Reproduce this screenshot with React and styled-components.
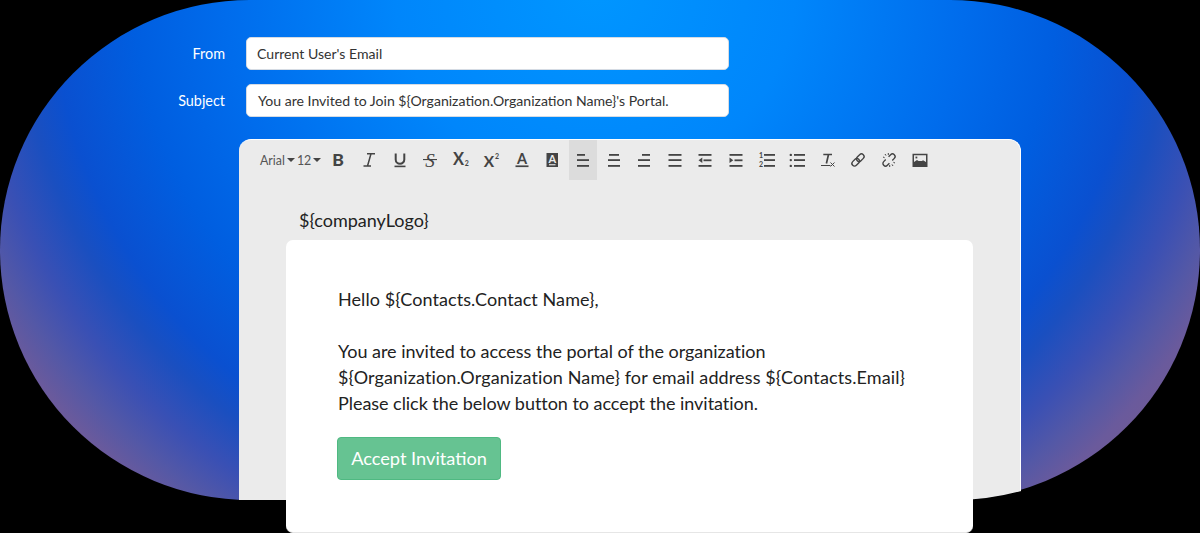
import styled, { createGlobalStyle } from 'styled-components';

const GlobalStyle = createGlobalStyle`
	html, body {
		margin: 0;
		height: 100%;
		background: #000;
		overflow: hidden;
	}
	body {
		font-family: Lato, 'Liberation Sans', sans-serif;
	}
`;

const Page = styled.div`
	position: relative;
	width: 1200px;
	height: 533px;
	overflow: hidden;
	background: #000;
`;

const Backdrop = styled.div`
	position: absolute;
	left: 0;
	top: 0;
	width: 1200px;
	height: 500px;
	border-radius: 250px;
	background: radial-gradient(
		ellipse 770px 730px at 595px -10px,
		#0096ff 0,
		#0086fb 26%,
		#006cec 48%,
		#005ee0 60%,
		#0a50d0 70.5%,
		#1a4fc0 75%,
		#3a50b4 81%,
		#5458a6 86%,
		#6a5a9c 90%,
		#7c5c88 100%
	);
`;

const Content = styled.div`
	position: relative;
	display: flex;
	flex-direction: column;
	padding-top: 37px;
`;

const Field = styled.div`
	display: flex;
	align-items: center;
	height: 33px;
	margin-bottom: 14px;
`;

const Label = styled.label`
	width: 225px;
	text-align: right;
	font-size: 14.4px;
	color: #fff;
`;

const Input = styled.div`
	box-sizing: border-box;
	width: 483px;
	height: 33px;
	margin-left: 21px;
	padding-left: ${(p) => p.$indent}px;
	display: flex;
	align-items: center;
	background: #fff;
	border: 1px solid #d5dbe3;
	border-radius: 5px;
	font-size: 14.08px;
	color: #333;
`;

const Editor = styled.div`
	box-sizing: border-box;
	width: 782px;
	height: 361px;
	margin: 8px 0 0 239px;
	background: #ebebeb;
	border-top: 1px solid #fff;
	border-right: 1px solid #fff;
	border-radius: 12px 12px 0 0;
	clip-path: path('M0 0 H782 V352 A250 250 0 0 1 711 361 H0 Z');
`;

const Toolbar = styled.div`
	display: flex;
	align-items: center;
	height: 40px;
	padding-left: 21px;
	color: #444;
`;

const FontPick = styled.span`
	display: flex;
	align-items: center;
	gap: 2px;
	font-size: 12.4px;
	color: #555;
`;

const Caret = styled.i`
	width: 0;
	height: 0;
	margin-right: ${(p) => p.$gap || 0}px;
	border-left: 4px solid transparent;
	border-right: 4px solid transparent;
	border-top: 4px solid #444;
`;

const Tool = styled.button`
	display: flex;
	align-items: center;
	justify-content: center;
	flex: none;
	width: 28px;
	height: 40px;
	margin-right: 2.6px;
	padding: 0;
	border: 0;
	background: ${(p) => (p.$active ? '#dcdcdc' : 'transparent')};
	color: #444;
`;

const Glyph = styled.svg`
	width: 18px;
	height: 18px;
	display: block;
	overflow: visible;
`;

const Small = ({ x, y, children }) => (
	<text x={x} y={y} textAnchor='middle' fontFamily='Lato, sans-serif' fontSize='7' fontWeight='700' fill='currentColor'>
		{children}
	</text>
);

const Big = ({ x = 9, y = 14, size = 16, weight = 700, family = 'Lato, sans-serif', italic, children }) => (
	<text
		x={x}
		y={y}
		textAnchor='middle'
		fontFamily={family}
		fontSize={size}
		fontWeight={weight}
		fontStyle={italic ? 'italic' : 'normal'}
		fill='currentColor'
	>
		{children}
	</text>
);

const Lines = ({ rows, children }) => (
	<Glyph viewBox='0 0 18 18'>
		{rows.map(([x, y, w], i) => (
			<rect key={i} x={x} y={y} width={w} height='1.8' fill='currentColor' />
		))}
		{children}
	</Glyph>
);

const LogoTag = styled.div`
	margin: 28px 0 0 60px;
	font-size: 18px;
	line-height: 24px;
	color: #222;
`;

const Document = styled.div`
	position: absolute;
	left: 286px;
	top: 240px;
	box-sizing: border-box;
	width: 687px;
	height: 293px;
	padding: 46px 52px;
	background: #fff;
	border-bottom: 1px solid #e6e6e6;
	border-radius: 7px;
	font-size: 18px;
	line-height: 26px;
	color: #222;
`;

const Paragraph = styled.p`
	margin: 0 0 26px;
`;

const Line = styled.span`
	display: block;
	letter-spacing: ${(p) => p.$track || 0}px;
`;

const AcceptButton = styled.div`
	box-sizing: border-box;
	display: flex;
	align-items: center;
	justify-content: center;
	width: 164px;
	height: 43px;
	margin: -5px 0 0 -1px;
	padding-bottom: 2px;
	background: #66c392;
	border: 1px solid #4fb982;
	border-radius: 4px;
	font-size: 18.2px;
	color: #fff;
`;

const App = () => {
	return (
		<Page>
			<GlobalStyle />
			<Backdrop />
			<Content>
				<Field>
					<Label>From</Label>
					<Input $indent={10}>Current User's Email</Input>
				</Field>
				<Field>
					<Label>Subject</Label>
					<Input $indent={11}>You are Invited to Join $&#123;Organization.Organization Name&#125;'s Portal.</Input>
				</Field>
				<Editor>
					<Toolbar>
						<FontPick>
							Arial
							<Caret />
							12
							<Caret $gap={3} />
						</FontPick>
						<Tool>
							<Glyph viewBox='0 0 18 18'>
								<Big size={17.5} y={15} weight={900}>B</Big>
							</Glyph>
						</Tool>
						<Tool>
							<Glyph viewBox='0 0 18 18'>
								<path d='M7 2.7 H15 M3.5 15 H11 M11 2.7 L7.5 15' stroke='currentColor' strokeWidth='1.5' fill='none' />
							</Glyph>
						</Tool>
						<Tool>
							<Glyph viewBox='0 0 18 18'>
								<path d='M4.7 2.5 V8.5 a4.3 4.3 0 0 0 8.6 0 V2.5' stroke='currentColor' strokeWidth='2' fill='none' />
								<rect x='3.5' y='14.6' width='11' height='1.6' fill='currentColor' />
							</Glyph>
						</Tool>
						<Tool>
							<Glyph viewBox='0 0 18 18'>
								<Big size={19} y={15.5} weight={400} italic family='Liberation Serif, serif'>S</Big>
								<rect x='2' y='8' width='14' height='1.1' fill='currentColor' />
							</Glyph>
						</Tool>
						<Tool>
							<Glyph viewBox='0 0 18 18'>
								<Big x={6.5} y={14} size={16.5}>X</Big>
								<Small x={14.8} y={15}>2</Small>
							</Glyph>
						</Tool>
						<Tool>
							<Glyph viewBox='0 0 18 18'>
								<Big x={7} y={16} size={15.5}>X</Big>
								<Small x={15} y={8}>2</Small>
							</Glyph>
						</Tool>
						<Tool>
							<Glyph viewBox='0 0 18 18'>
								<Big y={12.5} size={14.5}>A</Big>
								<rect x='2.5' y='14.4' width='13' height='1.7' fill='currentColor' />
							</Glyph>
						</Tool>
						<Tool>
							<Glyph viewBox='0 0 18 18'>
								<rect x='3.5' y='2' width='11.5' height='14' fill='currentColor' />
								<text x='9.2' y='12' textAnchor='middle' fontFamily='Lato, sans-serif' fontSize='11' fontWeight='700' fill='#ebebeb'>A</text>
								<rect x='6' y='13.2' width='6.5' height='1.1' fill='#ebebeb' />
							</Glyph>
						</Tool>
						<Tool $active><Lines rows={[[3, 3, 8], [3, 8.2, 12], [3, 14, 12]]} /></Tool>
						<Tool><Lines rows={[[4, 3, 10], [3, 8.2, 12], [3, 14, 12]]} /></Tool>
						<Tool><Lines rows={[[7, 3, 8], [3, 8.2, 12], [3, 14, 12]]} /></Tool>
						<Tool><Lines rows={[[2.5, 3, 13], [2.5, 8.2, 13], [2.5, 14, 13]]} /></Tool>
						<Tool>
							<Lines rows={[[2.5, 3, 13], [7.5, 8.4, 8], [2.5, 14, 13]]}>
								<path d='M6.3 6.6 L2.5 9.3 L6.3 12 Z' fill='currentColor' />
							</Lines>
						</Tool>
						<Tool>
							<Lines rows={[[2.5, 3, 13], [7.5, 8.4, 8], [2.5, 14, 13]]}>
								<path d='M2.5 6.6 L6.3 9.3 L2.5 12 Z' fill='currentColor' />
							</Lines>
						</Tool>
						<Tool>
							<Lines rows={[[6, 3, 11], [6, 8.2, 11], [6, 14, 11]]}>
								<Small x={3} y={6.5}>1</Small>
								<Small x={3} y={15.5}>2</Small>
							</Lines>
						</Tool>
						<Tool>
							<Lines rows={[[6, 3, 11], [6, 8.2, 11], [6, 14, 11]]}>
								<circle cx='2.8' cy='3.9' r='1.2' fill='currentColor' />
								<circle cx='2.8' cy='9.1' r='1.2' fill='currentColor' />
								<circle cx='2.8' cy='14.9' r='1.2' fill='currentColor' />
							</Lines>
						</Tool>
						<Tool>
							<Glyph viewBox='0 0 18 18'>
								<path d='M4.3 3.5 H13 M9.5 3.5 L7.4 12.5' stroke='currentColor' strokeWidth='1.7' fill='none' />
								<rect x='2' y='14' width='9.5' height='1' fill='currentColor' />
								<path d='M11.5 11.5 L15.5 15.5 M15.5 11.5 L11.5 15.5' stroke='currentColor' strokeWidth='1' />
							</Glyph>
						</Tool>
						<Tool>
							<Glyph viewBox='0 0 18 18'>
								<g transform='rotate(-45 9 9)' stroke='currentColor' strokeWidth='1.4' fill='none'>
									<rect x='1.5' y='6.4' width='8.5' height='5.2' rx='2.6' />
									<rect x='8' y='6.4' width='8.5' height='5.2' rx='2.6' />
								</g>
							</Glyph>
						</Tool>
						<Tool>
							<Glyph viewBox='0 0 18 18'>
								<g transform='rotate(-45 9 9)' stroke='currentColor' strokeWidth='1.4' fill='none'>
									<path d='M11 6.4 H13.9 a2.6 2.6 0 0 1 0 5.2 H11' />
									<path d='M7 6.4 H4.1 a2.6 2.6 0 0 0 0 5.2 H7' />
								</g>
								<path d='M5 3 l1 1.6 M8.3 2 v2 M3 6 l1.6 .7 M13 15 l-1 -1.6 M9.7 16 v-2 M15 12 l-1.6 -.7' stroke='currentColor' strokeWidth='1' />
							</Glyph>
						</Tool>
						<Tool>
							<Glyph viewBox='0 0 18 18'>
								<path fillRule='evenodd' d='M1.5 2.8 H16.5 V16 H1.5 Z M3 4.3 V11 L6 9 L7.5 10 H11 L12 9.2 L15 11 V4.3 Z' fill='currentColor' />
								<rect x='4.5' y='5.6' width='1.8' height='1.8' fill='currentColor' />
							</Glyph>
						</Tool>
					</Toolbar>
					<LogoTag>$&#123;companyLogo&#125;</LogoTag>
				</Editor>
			</Content>
			<Document>
				<Paragraph>
					<Line $track={0.07}>Hello $&#123;Contacts.Contact Name&#125;,</Line>
				</Paragraph>
				<Paragraph>
					<Line $track={-0.02}>You are invited to access the portal of the organization</Line>
					<Line $track={0.12}>$&#123;Organization.Organization Name&#125; for email address $&#123;Contacts.Email&#125;</Line>
					<Line $track={-0.04}>Please click the below button to accept the invitation.</Line>
				</Paragraph>
				<AcceptButton>Accept Invitation</AcceptButton>
			</Document>
		</Page>
	);
};

export default App;
